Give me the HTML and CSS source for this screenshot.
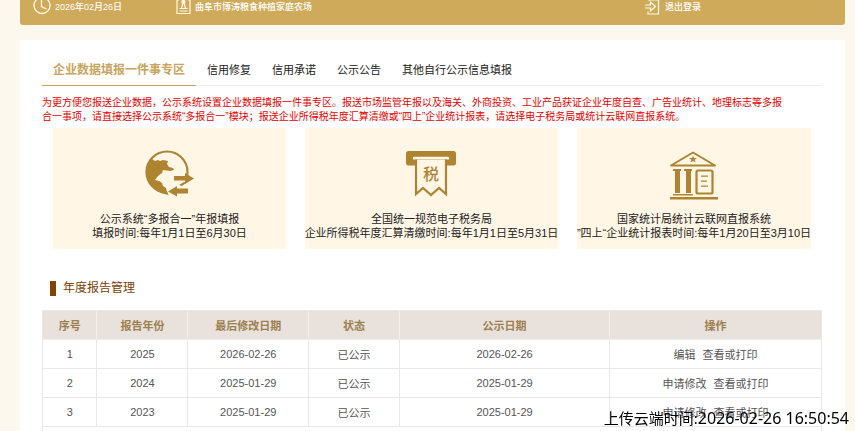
FILE: index.html
```html
<!DOCTYPE html>
<html lang="zh-CN">
<head>
    <meta charset="UTF-8">
    <meta name="viewport" content="width=device-width, initial-scale=1.0">
    <title>年度报告管理</title>
    <link rel="stylesheet" href="styles.css">
</head>
<body>
    <header class="top-bar">
        <div class="top-item">
            <svg width="18" height="15" viewBox="0 0 18 15" fill="none" stroke="#fff8e6" stroke-width="1.3">
                <circle cx="9" cy="5.500" r="8"/>
                <path d="M8.500 0v6.500l5 2.500"/>
            </svg>
            <span>2026年02月26日</span>
        </div>
        <div class="top-item">
            <svg width="15" height="15" viewBox="0 0 15 15" fill="none" stroke="#fff8e6" stroke-width="1.2">
                <path d="M3 0H1v13.500h13V0h-2M3.500 11h8M3.500 8.500h8M5.500 8.500L7 3V0M9.500 8.500L8 3V0"/>
                <circle cx="7.500" cy="2" r="1.500"/>
            </svg>
            <span>曲阜市博涛粮食种植家庭农场</span>
        </div>
        <a href="#" class="top-item logout">
            <svg width="15" height="15" viewBox="0 0 15 15" fill="none" stroke="#fff8e6" stroke-width="1.2">
                <path d="M3 0h10.500v14H3v-2.500"/>
                <path d="M0 5h5.500V2l5 4.500-5 4.500V8H0"/>
            </svg>
            <span>退出登录</span>
        </a>
    </header>

    <main class="panel">
        <nav class="tabs">
            <a href="#" class="tab active">企业数据填报一件事专区</a>
            <a href="#" class="tab">信用修复</a>
            <a href="#" class="tab">信用承诺</a>
            <a href="#" class="tab">公示公告</a>
            <a href="#" class="tab">其他自行公示信息填报</a>
        </nav>

        <p class="notice">为更方便您报送企业数据，公示系统设置企业数据填报一件事专区。报送市场监管年报以及海关、外商投资、工业产品获证企业年度自查、广告业统计、地理标志等多报<br>合一事项，请直接选择公示系统“多报合一”模块；报送企业所得税年度汇算清缴或“四上”企业统计报表，请选择电子税务局或统计云联网直报系统。</p>

        <div class="cards">
            <a href="#" class="card">
                <svg width="50" height="50" viewBox="0 0 50 50">
                    <circle cx="22" cy="22" r="20.500" fill="none" stroke="#ae8431" stroke-width="2.200"/>
                    <path fill="#ae8431" d="M7 9l3 2 3-1 2 1 3-1 5 1-1 3 2 3 4 1 1 2-4 1-7-1-1 3-4 3-3 4 4 1 3 2 1 3 3 2 1 4 4 1-1 2C11 44 2 34 1.500 23 1.500 17 4 12 7 9z"/>
                    <path fill="#fff6e6" d="M28 25h10v-2l12 5-7 8v10H24l-2-5 6-5z"/>
                    <path fill="#ae8431" d="M29 26h11v-3l9 5.500-9 5.500v-3.500H29z"/>
                    <path fill="#ae8431" d="M43 38.500v5H32v3l-9-5 9-5.500v2.500zM34 35l5-3 2 1-4 3z"/>
                </svg>
                <span>公示系统“多报合一”年报填报</span>
                <span>填报时间:每年1月1日至6月30日</span>
            </a>
            <a href="#" class="card">
                <svg width="50" height="50" viewBox="0 0 50 50">
                    <rect x="0" y="1" width="50" height="14.500" rx="2.500" fill="#ae8431"/>
                    <rect x="7" y="7" width="36" height="2.500" fill="#fff6e6"/>
                    <path d="M10 8.500v35.500l7-6 8 7 8-7 7 6V8.500z" fill="#fff6e6" stroke="#ae8431" stroke-width="2.200"/>
                    <path d="M8 8h34" stroke="#fff6e6" stroke-width="2.500"/>
                    <text class="tax-mark" x="25" y="30" text-anchor="middle">税</text>
                </svg>
                <span>全国统一规范电子税务局</span>
                <span>企业所得税年度汇算清缴时间:每年1月1日至5月31日</span>
            </a>
            <a href="#" class="card">
                <svg width="50" height="50" viewBox="0 0 50 50" fill="#ae8431">
                    <path d="M24 2.500L2 15.500h44z" fill="none" stroke="#ae8431" stroke-width="2" stroke-linejoin="round"/>
                    <path d="M24 5.500l1 2.500h3l-2.300 1.800.9 2.700-2.600-1.600-2.600 1.600.9-2.700L20 8h3z"/>
                    <path d="M4 19h8v2h-1v22H6V21H4zM15 19h8v2h-1v22h-5V21h-2z"/>
                    <rect x="27.500" y="20.500" width="16" height="23" rx="1.500" fill="none" stroke="#ae8431" stroke-width="2.200"/>
                    <path d="M32 25.500h7v1.200h-7zM32 30.500h6v1.200h-6zM32 35.500h7v1.200h-7z"/>
                    <path d="M1 47h48v2.500H1zM4 44h20v1.500H4z"/>
                </svg>
                <span>国家统计局统计云联网直报系统</span>
                <span>”四上“企业统计报表时间:每年1月20日至3月10日</span>
            </a>
        </div>

        <h2 class="section-title">年度报告管理</h2>

        <div class="table-wrap">
            <table class="report-table">
                <thead>
                    <tr>
                        <th class="col-no">序号</th>
                        <th class="col-year">报告年份</th>
                        <th class="col-modified">最后修改日期</th>
                        <th class="col-status">状态</th>
                        <th class="col-date">公示日期</th>
                        <th>操作</th>
                    </tr>
                </thead>
                <tbody>
                    <tr>
                        <td>1</td>
                        <td>2025</td>
                        <td>2026-02-26</td>
                        <td>已公示</td>
                        <td>2026-02-26</td>
                        <td class="actions"><a href="#">编辑</a><a href="#">查看或打印</a></td>
                    </tr>
                    <tr>
                        <td>2</td>
                        <td>2024</td>
                        <td>2025-01-29</td>
                        <td>已公示</td>
                        <td>2025-01-29</td>
                        <td class="actions"><a href="#">申请修改</a><a href="#">查看或打印</a></td>
                    </tr>
                    <tr>
                        <td>3</td>
                        <td>2023</td>
                        <td>2025-01-29</td>
                        <td>已公示</td>
                        <td>2025-01-29</td>
                        <td class="actions"><a href="#">申请修改</a><a href="#">查看或打印</a></td>
                    </tr>
                </tbody>
            </table>
        </div>
    </main>

    <div class="upload-time">上传云端时间:<span class="stamp">2026-02-26 16:50:54</span></div>
</body>
</html>
```
FILE: styles.css
```css
* {
    margin: 0;
    padding: 0;
    box-sizing: border-box;
}

body {
    font-family: "Liberation Sans", "Noto Sans CJK SC", sans-serif;
    font-size: 11px;
    color: #222;
    background: #fcf8ee;
    min-height: 100vh;
    display: flex;
    flex-direction: column;
    padding: 0 10px 0 20px;
}

a {
    color: inherit;
    text-decoration: none;
}

/* top bar */
.top-bar {
    display: grid;
    grid-template-columns: 143fr 469fr 200fr;
    background: #d0aa5b;
    border-radius: 0 0 3px 3px;
    padding: 0 0 10px 13px;
    color: #fff;
    font-size: 9px;
    font-weight: 500;
    line-height: 14px;
}

.top-item {
    display: flex;
    gap: 4px;
}

.logout {
    gap: 5px;
}

/* main panel */
.panel {
    flex: 1;
    display: flex;
    flex-direction: column;
    margin-top: 15px;
    padding: 15px 23px 0 22px;
    background: #fff;
}

.tabs {
    display: flex;
    gap: 1px;
    border-bottom: 1px solid #eee;
    line-height: 30px;
}

.tab {
    padding: 0 10px;
}

.tab.active {
    padding: 0 11px;
    margin-bottom: -1px;
    border-bottom: 1px solid #c9a45c;
    color: #c9a45c;
    font-size: 12px;
    font-weight: bold;
}

.notice {
    margin-top: 10px;
    color: #e60000;
    font-size: 10px;
    line-height: 14px;
    white-space: nowrap;
}

.cards {
    display: flex;
    justify-content: space-between;
    margin-top: 4px;
    padding: 0 11px;
}

.card {
    display: flex;
    flex-direction: column;
    align-items: center;
    min-width: 233px;
    padding: 22px 0 9px;
    background: #fff6e6;
    line-height: 14px;
    white-space: nowrap;
}

.card svg {
    margin-bottom: 12px;
}

.tax-mark {
    font-size: 16px;
    font-weight: 500;
    fill: #ae8431;
}

.section-title {
    display: flex;
    align-items: center;
    gap: 7px;
    margin: 30px 0 13px 8px;
    color: #7a4208;
    font-size: 12px;
    font-weight: normal;
    line-height: 18px;
}

.section-title::before {
    content: "";
    width: 6px;
    height: 15px;
    background: #854300;
}

/* report list */
.table-wrap {
    flex: 1;
    border: 1px solid #e8e8e8;
    border-bottom: none;
}

.report-table {
    width: 100%;
    table-layout: fixed;
    border-collapse: separate;
    border-spacing: 0;
    text-align: center;
    color: #555;
}

.report-table th,
.report-table td {
    height: 29px;
    border-right: 1px solid #e8e8e8;
    border-bottom: 1px solid #e8e8e8;
}

.report-table th:last-child,
.report-table td:last-child {
    border-right: none;
}

.report-table th {
    background: #e9e2dc;
    border-color: #f3efec;
    color: #9c8050;
    font-weight: bold;
}

.col-no {
    width: 7%;
}

.col-year,
.col-status {
    width: 11.7%;
}

.col-modified {
    width: 15.5%;
}

.col-date {
    width: 27%;
}

.actions a + a {
    margin-left: 7px;
}

/* upload timestamp over the page */
.upload-time {
    position: fixed;
    right: 6px;
    bottom: 2px;
    color: #000;
    font-family: "Noto Sans", "Noto Sans CJK SC", sans-serif;
    font-size: 15px;
    line-height: 22px;
    white-space: nowrap;
}

.stamp {
    font-size: 16px;
}
```
